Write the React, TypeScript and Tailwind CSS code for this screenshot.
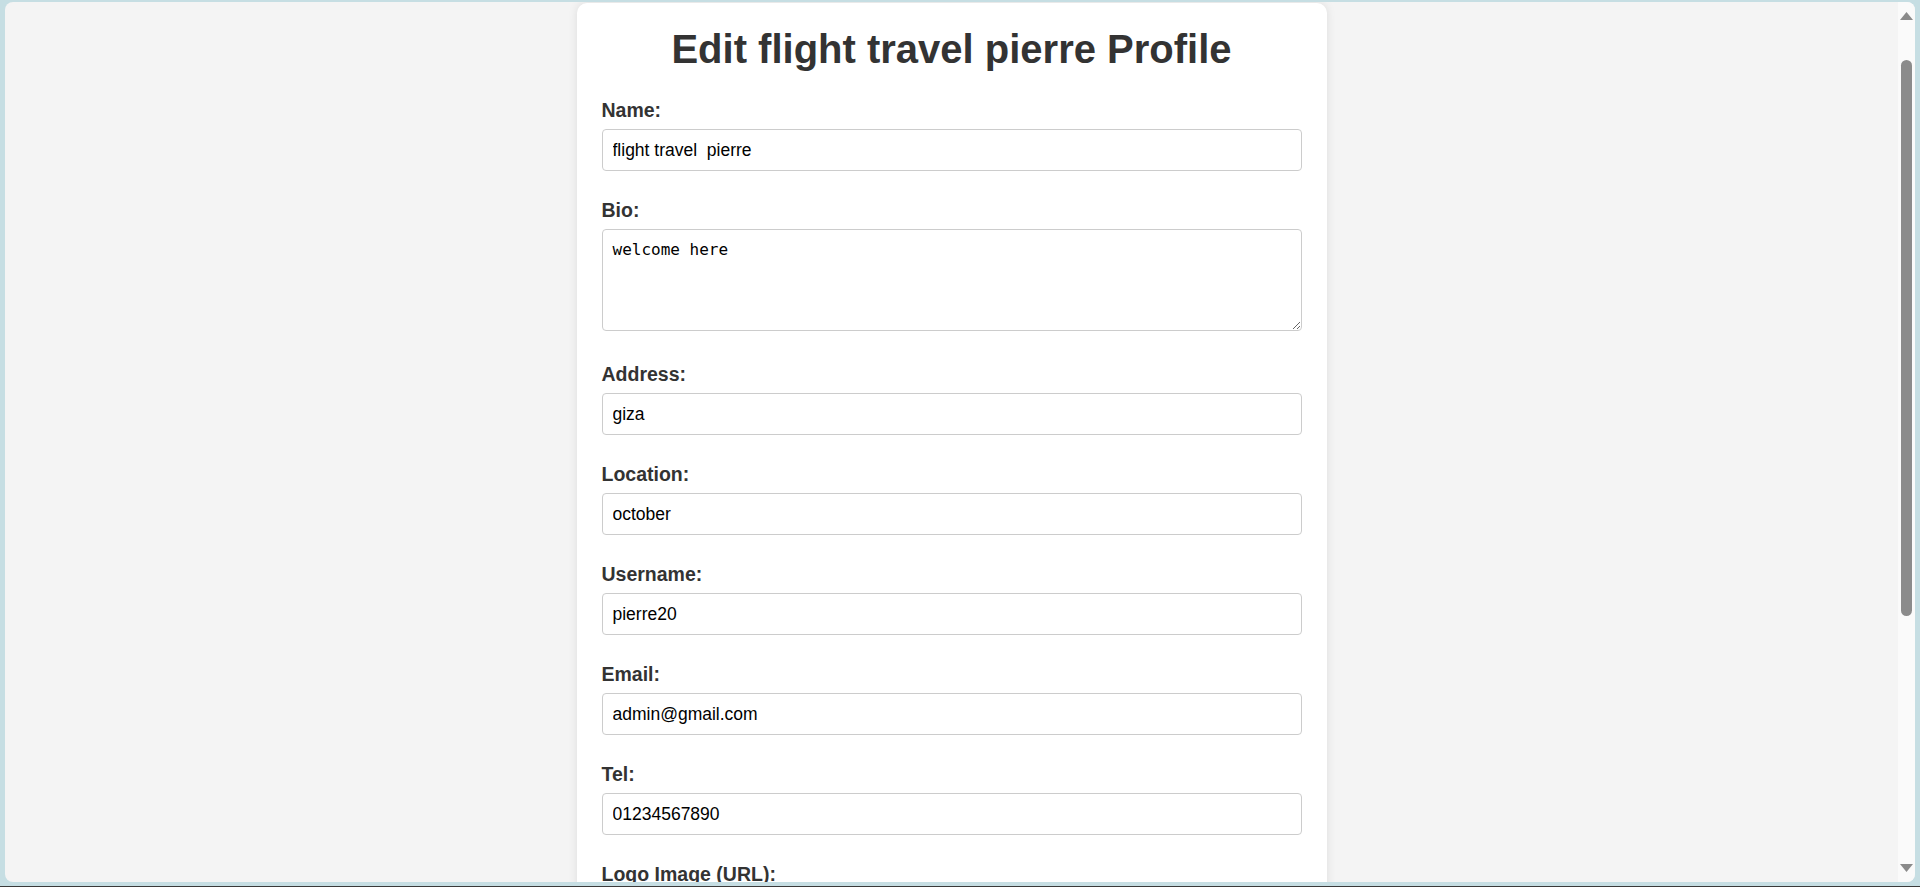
import React from 'react'

type Field = { label: string; value: string; area?: boolean }

const fields: Field[] = [
  { label: 'Name:', value: 'flight travel  pierre' },
  { label: 'Bio:', value: 'welcome here', area: true },
  { label: 'Address:', value: 'giza' },
  { label: 'Location:', value: 'october' },
  { label: 'Username:', value: 'pierre20' },
  { label: 'Email:', value: 'admin@gmail.com' },
  { label: 'Tel:', value: '01234567890' },
  { label: 'Logo Image (URL):', value: '' },
]

function FormField({ field }: { field: Field }) {
  return (
    <div className={field.area ? 'mb-[32px]' : 'mb-[28px]'}>
      <label className="block text-[19.5px] leading-[22px] font-bold text-[#333] mb-[8px]">
        {field.label}
      </label>
      {field.area ? (
        <textarea
          defaultValue={field.value}
          className="block w-full h-[102px] px-[10px] py-[10px] border border-[#ccc] rounded-[4px] bg-white text-black text-[16px] leading-[19px] font-['DejaVu_Sans_Mono',monospace] outline-none"
        />
      ) : (
        <input
          type="text"
          defaultValue={field.value}
          className="block w-full h-[42px] px-[10px] border border-[#ccc] rounded-[4px] bg-white text-black text-[17.5px] font-['Liberation_Sans',Arial,sans-serif] whitespace-pre outline-none"
        />
      )}
    </div>
  )
}

function ScrollBar() {
  return (
    <div className="w-[17px] bg-[#fafafa] flex flex-col items-center">
      <svg width="13" height="8" viewBox="0 0 13 8" className="mt-[10px]">
        <path d="M6.5 0 L13 8 L0 8 Z" fill="#8a8a8a" />
      </svg>
      <div className="mt-[40px] w-[11px] h-[556px] rounded-full bg-[#8b8b8b]" />
      <svg width="13" height="8" viewBox="0 0 13 8" className="mt-auto mb-[10px]">
        <path d="M0 0 L13 0 L6.5 8 Z" fill="#8a8a8a" />
      </svg>
    </div>
  )
}

export default function App() {
  return (
    <div className="h-[887px] w-full bg-[#c6dee3] flex flex-col overflow-hidden font-['Liberation_Sans',Arial,sans-serif]">
      <div className="mt-[2px] mx-[5px] h-[880px] flex rounded-[8px] overflow-hidden bg-[#f4f4f4]">
        <main className="flex-1 flex justify-center overflow-hidden">
          <div className="mt-px w-[750px] h-[900px] bg-white rounded-[10px] shadow-[0_0_10px_rgba(0,0,0,0.1)] px-[25px] pt-[23px]">
            <h1 className="text-[40px] leading-[46px] font-bold text-[#333] text-center mb-[27px]">
              Edit flight travel pierre Profile
            </h1>
            {fields.map((f) => (
              <FormField key={f.label} field={f} />
            ))}
          </div>
        </main>
        <ScrollBar />
      </div>
      <div className="mt-auto h-px bg-[#3a3a3a]" />
    </div>
  )
}
